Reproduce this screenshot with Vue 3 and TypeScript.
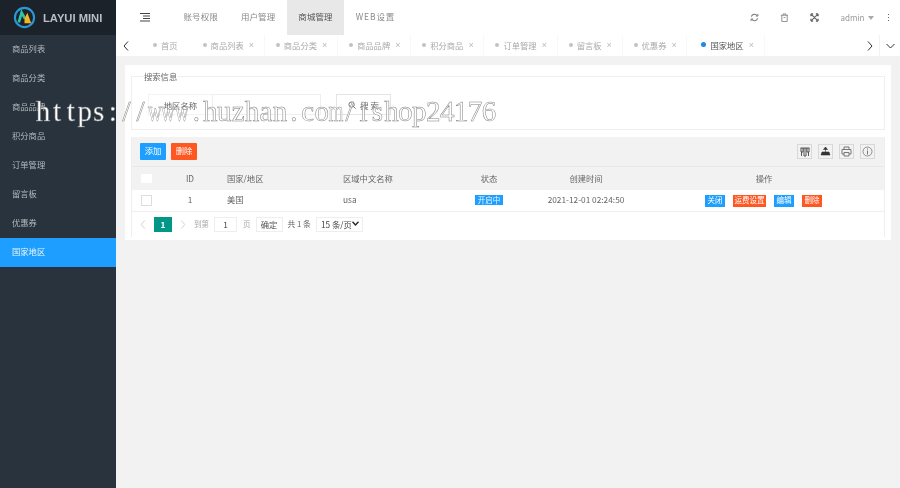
<script setup lang="ts">
const sideItems: string[] = ['商品列表', '商品分类', '商品品牌', '积分商品', '订单管理', '留言板', '优惠券', '国家地区']
const navItems: string[] = ['账号权限', '用户管理', '商城管理', 'WEB设置']
const tabs: string[] = ['商品列表', '商品分类', '商品品牌', '积分商品', '订单管理', '留言板', '优惠券', '国家地区']
const heads: string[] = ['ID', '国家/地区', '区域中文名称', '状态', '创建时间', '操作']
const markChars: string[] = 'https://www.huzhan.com/ishop24176'.split('')
</script>

<template>
  <div class="page">
    <div class="shell">
      <aside class="side">
        <div class="brand">
          <svg class="logo" width="23" height="23" viewBox="0 0 24 24">
            <circle cx="12" cy="12" r="10" fill="none" stroke="#2a97d6" stroke-width="2.2" />
            <path d="M6 17 L9 7 L12.5 13" fill="none" stroke="#2fc0a8" stroke-width="2.8" />
            <path d="M12 13 L15 7 L19 18 L12 18" fill="#f4b323" />
          </svg>
          <span>LAYUI MINI</span>
        </div>
        <div v-for="(s, i) in sideItems" :key="s" class="side-item" :class="{ on: i === 7 }">{{ s }}</div>
      </aside>
      <main class="main">
        <header class="top">
          <svg class="burger" width="10" height="9" viewBox="0 0 10 9"><path d="M0 .5h10M3 3h7M3 5.500h7M0 8h10" stroke="#444" stroke-width="1" fill="none" /></svg>
          <nav class="nav">
            <a v-for="(n, i) in navItems" :key="n" class="nav-item" :class="{ on: i === 2 }">{{ n }}</a>
          </nav>
          <div class="top-right">
            <svg class="ti" width="9" height="9" viewBox="0 0 10 10"><path d="M1.500 4A3.600 3.600 0 0 1 8 3M8.500 6A3.600 3.600 0 0 1 2 7" fill="none" stroke="#777" stroke-width="1.200" /><path d="M8.800 1v2.400H6.400M1.200 9V6.600h2.400" fill="none" stroke="#777" stroke-width="1" /></svg>
            <svg class="ti" width="9" height="9" viewBox="0 0 10 10"><path d="M1 2.500h8M3.500 2.500V1h3v1.500M2 2.500v7h6v-7M4 5h2" fill="none" stroke="#888" stroke-width="1" /></svg>
            <svg class="ti" width="9" height="9" viewBox="0 0 10 10"><path d="M1 1l8 8M9 1L1 9M1 1h2.500M1 1v2.500M9 1H6.500M9 1v2.500M1 9h2.500M1 9V6.500M9 9H6.500M9 9V6.500" fill="none" stroke="#666" stroke-width="1.300" /></svg>
            <span class="admin">admin</span>
            <i class="caret"></i>
            <span class="more"><b></b><b></b><b></b></span>
          </div>
        </header>
        <div class="tabbar">
          <div class="arrow left"><svg width="6" height="10" viewBox="0 0 6 10"><path d="M5 .5L1 5l4 4.500" fill="none" stroke="#333" /></svg></div>
          <div class="tabs">
            <div class="tab home"><i class="dot"></i>首页</div>
            <div v-for="(t, i) in tabs" :key="t" class="tab" :class="{ on: i === 7 }">
              <i class="dot"></i>{{ t }}<span class="x">×</span>
            </div>
          </div>
          <div class="arrow right"><svg width="6" height="10" viewBox="0 0 6 10"><path d="M1 .5L5 5 1 9.500" fill="none" stroke="#333" /></svg></div>
          <div class="arrow down"><svg width="9" height="6" viewBox="0 0 9 6"><path d="M.5 1L4.500 5l4-4" fill="none" stroke="#333" /></svg></div>
        </div>
        <div class="body">
          <section class="card">
            <fieldset class="search">
              <legend>搜索信息</legend>
              <div class="search-row">
                <label class="s-label">地区名称</label>
                <div class="s-input"></div>
                <button class="s-btn">
                  <svg width="8" height="8" viewBox="0 0 10 10"><circle cx="4.500" cy="4.500" r="3.300" fill="none" stroke="#555" /><path d="M7 7l2.500 2.500" stroke="#555" /></svg>
                  搜 索
                </button>
              </div>
            </fieldset>
            <div class="table">
              <div class="toolbar">
                <button class="btn blue">添加</button>
                <button class="btn red">删除</button>
                <div class="tools">
                  <span class="tool"><svg width="10" height="10" viewBox="0 0 10 10"><path d="M.500 1h9M1 1v4h2V1M4 1v8h2V1M7 1v4h2V1M1.500 5v4M8.500 5v4" fill="none" stroke="#444" stroke-width=".9" /></svg></span>
                  <span class="tool"><svg width="11" height="11" viewBox="0 0 11 11"><path d="M5.500 1v5M3.500 3.500h4L5.500 1zM2 6h7l1 3H1z" fill="#333" stroke="#333" stroke-width=".6" /></svg></span>
                  <span class="tool"><svg width="11" height="11" viewBox="0 0 11 11"><path d="M3 3V1h5v2M3 8H1V3.500h9V8H8M3 6.500h5V10H3z" fill="none" stroke="#777" /></svg></span>
                  <span class="tool"><svg width="11" height="11" viewBox="0 0 11 11"><circle cx="5.500" cy="5.500" r="4.500" fill="none" stroke="#777" stroke-width=".8" /><path d="M5.500 4.500V8.500M5.500 2.500v1" stroke="#777" /></svg></span>
                </div>
              </div>
              <div class="grid head">
                <div class="cell c"><i class="check fill"></i></div>
                <div v-for="(h, i) in heads" :key="h" class="cell t2" :class="{ c: i === 0 || i >= 3, l: i === 1 || i === 2 }">{{ h }}</div>
              </div>
              <div class="grid row">
                <div class="cell c"><i class="check"></i></div>
                <div class="cell c t3">1</div>
                <div class="cell l t3">美国</div>
                <div class="cell l t3">usa</div>
                <div class="cell c t2"><span class="badge">开启中</span></div>
                <div class="cell c t3">2021-12-01 02:24:50</div>
                <div class="cell c ops">
                  <span class="op blue">关闭</span>
                  <span class="op red">运费设置</span>
                  <span class="op blue">编辑</span>
                  <span class="op red">删除</span>
                </div>
              </div>
              <div class="pager">
                <svg class="pg-a" width="6" height="9" viewBox="0 0 6 10"><path d="M5 .5L1 5l4 4.500" fill="none" stroke="#ccc" /></svg>
                <span class="cur">1</span>
                <svg class="pg-b" width="6" height="9" viewBox="0 0 6 10"><path d="M1 .5L5 5 1 9.500" fill="none" stroke="#ccc" /></svg>
                <span class="gray to">到第</span>
                <span class="pg-in">1</span>
                <span class="gray">页</span>
                <span class="pg-ok">确定</span>
                <span class="total">共 1 条</span>
                <span class="pg-sel">15 条/页<svg width="7" height="5" viewBox="0 0 7 5"><path d="M.5.700L3.500 4l3-3.300" fill="none" stroke="#222" stroke-width="1.300" /></svg></span>
              </div>
            </div>
          </section>
        </div>
      </main>
    </div>
    <div class="mark"><span v-for="(ch, i) in markChars" :key="i" class="mc" :class="{ wide: ch === 'w' || ch === 'm' }">{{ ch }}</span></div>
  </div>
</template>

<style scoped>
.page { position: relative; width: 900px; height: 488px; overflow: hidden; font-family: "Noto Sans CJK SC", "Liberation Sans", sans-serif; font-size: 8.3px; color: #666; }
.shell { display: flex; width: 100%; height: 100%; filter: blur(.3px); }
.side { width: 116px; flex: none; background: #28333e; }
.brand { height: 35px; background: #1b2229; display: flex; align-items: center; padding-left: 13px; gap: 7px; color: #b9bec3; font: bold 11.200px "Liberation Sans", sans-serif; box-sizing: border-box; }
.logo { flex: none; }
.side-item { height: 29px; line-height: 27px; padding-left: 12px; color: #b3b8bd; }
.side-item.on { background: #1e9fff; color: #eaf6ff; }
.main { flex: 1; min-width: 0; display: flex; flex-direction: column; background: #f2f2f2; }
.top { height: 35px; flex: none; background: #fff; display: flex; align-items: center; position: relative; }
.burger { margin-left: 24px; margin-right: 22px; flex: none; }
.nav { display: flex; height: 35px; }
.nav-item { padding: 0 11.500px; line-height: 33px; color: #8a8a8a; white-space: nowrap; font-size: 8.500px; letter-spacing: .1px; }
.nav-item:last-child { letter-spacing: .9px; }
.nav-item.on { background: #e8e8e8; color: #555; }
.top-right { margin-left: auto; display: flex; align-items: center; padding-right: 11px; }
.ti { margin-right: 21px; }
.admin { color: #999; margin-left: 1px; font-size: 8px; }
.caret { width: 0; height: 0; border: 3.500px solid transparent; border-top: 4px solid #aaa; border-bottom: 0; margin-left: 3px; }
.more { display: flex; flex-direction: column; gap: 1.500px; margin-left: 14px; }
.more b { width: 1.500px; height: 1.500px; background: #666; display: block; }
.tabbar { height: 21px; flex: none; background: #fff; display: flex; align-items: center; }
.arrow { height: 21px; display: flex; align-items: center; justify-content: center; flex: none; }
.arrow.left { width: 22px; padding-right: 2px; box-sizing: border-box; }
.arrow.right { width: 18px; margin-left: auto; }
.arrow.down { width: 21px; border-left: 1px solid #f2f2f2; box-sizing: border-box; }
.tabs { display: flex; height: 21px; padding-left: 4px; }
.tab { display: flex; align-items: center; padding: 0 8px 2px 11px; white-space: nowrap; color: #aaa; font-size: 8.300px; border-right: 1px solid #f8f8f8; box-sizing: border-box; }
.tab.home { padding-right: 14px; border-right: 0; }
.tab:nth-child(9) { margin-left: 3px; }
.tab.on { color: #555; }
.dot { width: 4px; height: 4px; border-radius: 50%; background: #c2c2c2; margin-right: 4px; flex: none; }
.tab.on .dot { width: 5px; height: 5px; background: #1e88e5; }
.x { margin-left: 5px; color: #bbb; font: 9px "Liberation Sans", sans-serif; width: 7px; }
.body { flex: 1; min-height: 0; padding: 9px 9px 0; }
.card { background: #fff; height: 175px; padding: 6px 6px 0 6px; box-sizing: border-box; }
.search { border: 1px solid #efefef; margin: 0; padding: 0 0 0 16px; height: 59px; box-sizing: border-box; min-width: 0; }
.search legend { padding: 0 1px 0 0; color: #666; font-size: 8.300px; margin-left: -4px; line-height: 10px; }
.search-row { display: flex; margin-top: 13px; height: 21px; }
.s-label { width: 64px; flex: none; border: 1px solid #f3f3f3; border-right: 0; box-sizing: border-box; text-align: right; padding-right: 15px; line-height: 21px; }
.s-input { width: 109px; flex: none; border: 1px solid #efefef; box-sizing: border-box; }
.s-btn { margin-left: 15px; width: 55px; height: 21px; background: #fff; border: 1px solid #e4e4e4; font: inherit; color: #666; padding: 0; display: flex; align-items: center; justify-content: center; gap: 4px; }
.table { margin-top: 7px; border-right: 1px solid #efefef; border-left: 1px solid #efefef; }
.toolbar { height: 30px; background: #f2f2f2; display: flex; align-items: center; padding-left: 8px; gap: 5px; box-sizing: border-box; border-bottom: 1px solid #e8e8e8; }
.btn { width: 26px; height: 17px; border: 0; border-radius: 1px; color: #fff; font: inherit; padding: 0 0 3px; }
.blue { background: #1e9fff; }
.red { background: #ff5722; }
.tools { margin-left: auto; display: flex; gap: 6px; padding-right: 9px; }
.tool { width: 15px; height: 15px; border: 1px solid #d8d8d8; box-sizing: border-box; display: flex; align-items: center; justify-content: center; }
.grid { display: grid; grid-template-columns: 30px 56px 116px 116px 78px 116px 1fr; align-items: center; }
.head { height: 23px; background: #f2f2f2; }
.row { height: 22px; background: #fff; border-bottom: 1px solid #efefef; box-sizing: border-box; }
.cell { white-space: nowrap; }
.cell.c { text-align: center; }
.cell.l { padding-left: 9px; }
.t2 { padding-bottom: 2px; }
.t3 { padding-bottom: 3px; }
.check { display: block; width: 11px; height: 11px; margin-left: 9px; background: #fff; border: 1px solid #ddd; box-sizing: border-box; }
.check.fill { border: 0; height: 9px; }
.badge { display: block; width: 28px; height: 10px; line-height: 9px; margin: 0 auto; background: #1e9fff; color: #e9f6ff; font-size: 7.500px; }
.ops { display: flex; justify-content: center; gap: 8px; padding-right: 1px; }
.op { height: 12px; line-height: 10px; padding: 0 1px; color: #fff; font-size: 7.500px; text-align: center; box-sizing: border-box; }
.op.blue { width: 20px; }
.op.red { min-width: 20px; }
.op:nth-child(2) { width: 33px; }
.pager { height: 25px; display: flex; align-items: center; background: #fff; }
.pg-a { margin-left: 8px; }
.cur { margin-left: 8px; width: 18px; height: 15px; line-height: 14px; text-align: center; background: #009688; color: #fff; font-weight: bold; }
.pg-b { margin-left: 8px; }
.gray { color: #aaa; font-size: 7.500px; padding-bottom: 2px; }
.to { margin-left: 8px; }
.pg-in { margin: 0 6px 0 5px; width: 23px; height: 15px; line-height: 13px; border: 1px solid #eee; box-sizing: border-box; text-align: center; color: #444; }
.pg-ok { margin-left: 5px; width: 27px; height: 15px; line-height: 12px; border: 1px solid #eee; box-sizing: border-box; text-align: center; color: #555; }
.total { margin-left: 5px; color: #666; font-size: 7.800px; padding-bottom: 2px; }
.pg-sel { margin-left: 5px; width: 47px; height: 15px; border: 1px solid #eee; box-sizing: border-box; display: flex; align-items: center; justify-content: space-between; padding: 0 3px 2px 4px; color: #444; }
.mark { position: absolute; left: 36px; top: 94px; display: flex; font: 29px/34px "Liberation Serif", serif; color: #fff; -webkit-text-stroke: .5px #808080; white-space: nowrap; opacity: .99; }
.mc { display: flex; justify-content: center; width: 13.940px; flex: none; }
.mc.wide { transform: scaleX(.66); }
</style>
